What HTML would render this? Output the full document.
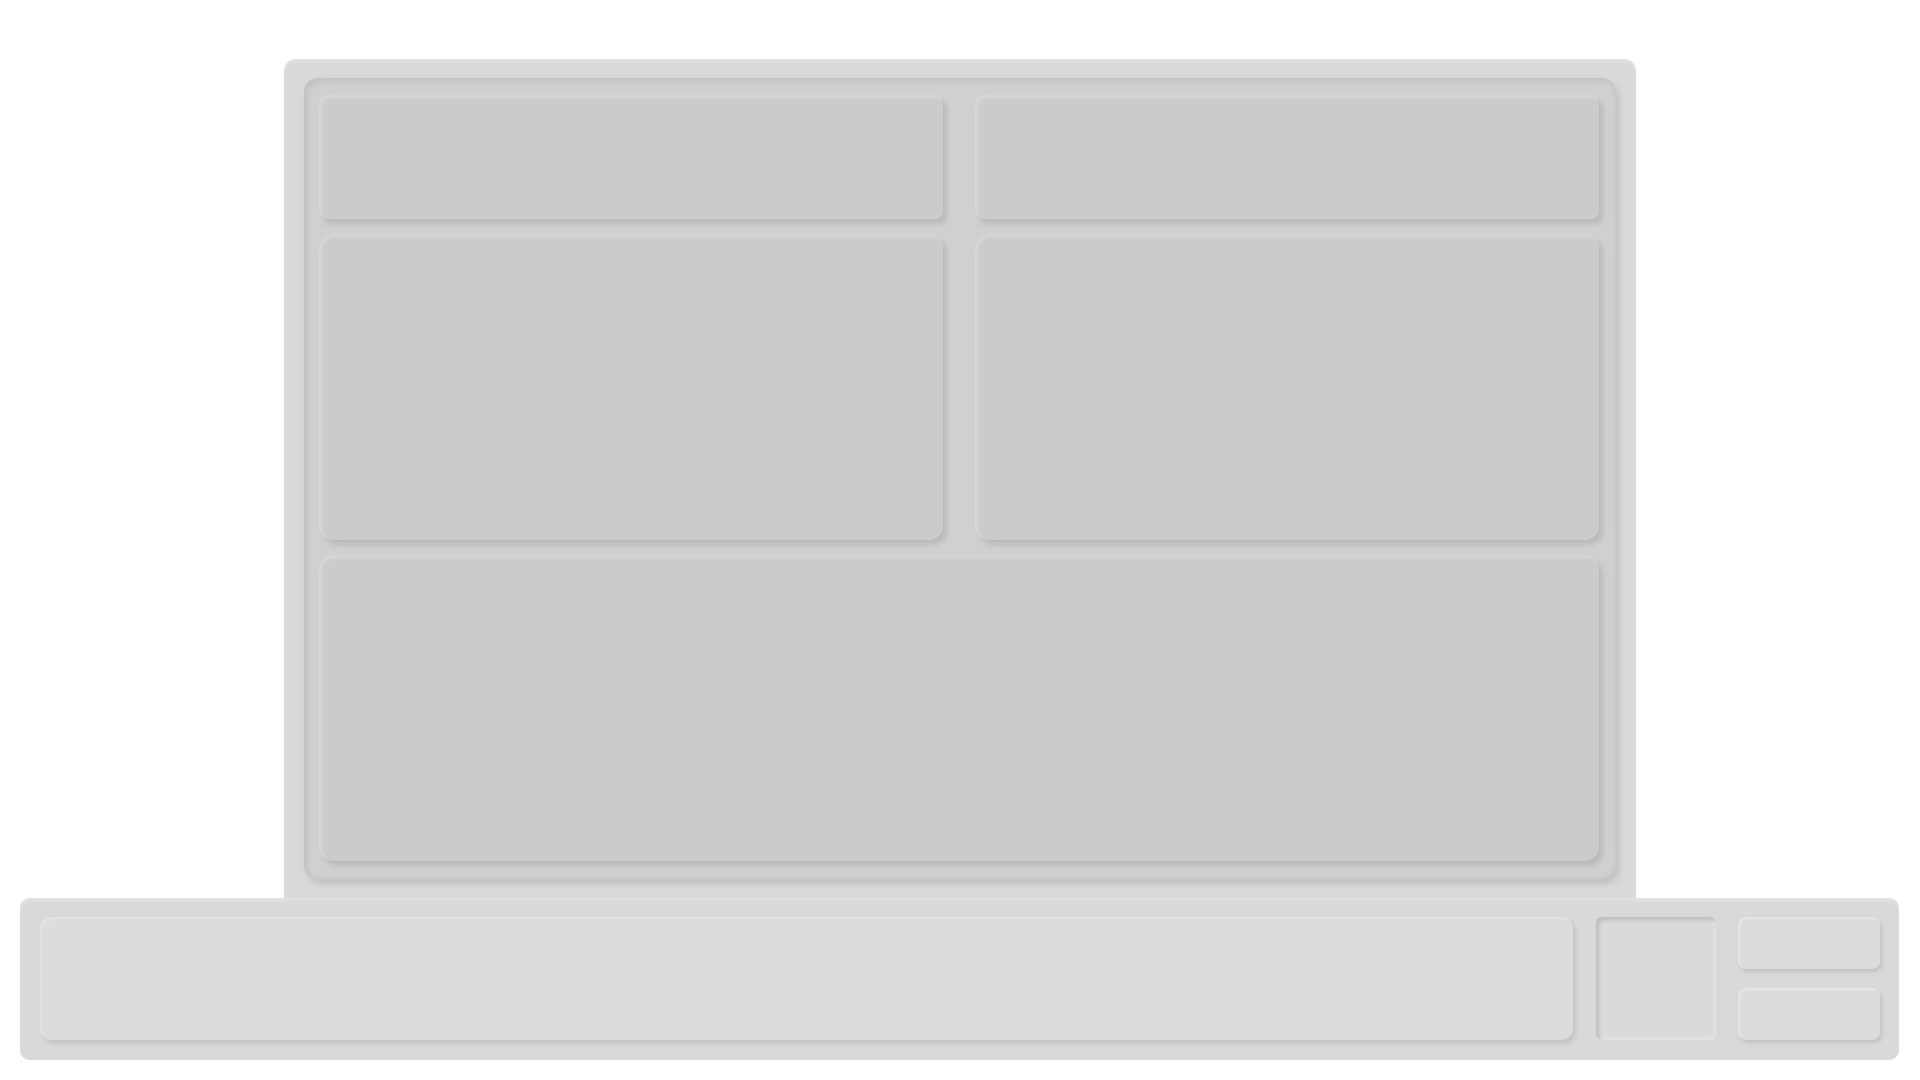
<!DOCTYPE html>
<html><head><style>
body{margin:0;width:1920px;height:1080px;background:#fff;position:relative;overflow:hidden;font-family:"Liberation Sans",sans-serif}
div{position:absolute;box-sizing:border-box}
.outer{left:284px;top:59px;width:1352px;height:845px;background:#d9d9d9;border-radius:12px 12px 0 0;box-shadow:inset 0 3px 3px #e2e2e2}
.inner{left:304px;top:78px;width:1312px;height:801px;background:#d1d0d0;border-radius:14px;box-shadow:inset 4px 4px 6px #c3c2c2,inset -2px -2px 4px #c9c8c8,3px 5px 7px #c2c1c1}
.card{background:#cccbca;border-radius:14px;box-shadow:inset 3px 3px 3px #d8d7d7,4px 5px 6px #bbbaba}
.bar{left:20px;top:898px;width:1879px;height:162px;background:#d9d9d9;border-radius:10px;box-shadow:inset 0 3px 3px #e2e2e2}
.inp{left:40px;top:917px;width:1533px;height:123px;background:#dcdcdc;border-radius:12px;box-shadow:inset 2px 2px 3px #e4e4e4,3px 4px 5px #c4c4c4}
.sq{left:1596px;top:917px;width:120px;height:123px;background:#dadada;border-radius:6px;box-shadow:inset 3px 3px 4px #bdbdbd,inset -2px -2px 3px #e6e6e6}
.btn{left:1738px;width:142px;height:52px;background:#dcdcdc;border-radius:8px;box-shadow:inset 2px 2px 2px #e6e6e6,2px 3px 4px #c2c2c2}
</style></head><body>
<div class="outer"></div>
<div class="inner"></div>
<div class="card" style="left:319px;top:95px;width:624px;height:124px;border-radius:8px"></div>
<div class="card" style="left:975px;top:95px;width:624px;height:124px;border-radius:8px"></div>
<div class="card" style="left:319px;top:234px;width:624px;height:306px"></div>
<div class="card" style="left:975px;top:234px;width:624px;height:306px"></div>
<div class="card" style="left:319px;top:555px;width:1280px;height:306px"></div>
<div class="bar"></div>
<div class="inp"></div>
<div class="sq"></div>
<div class="btn" style="top:917px"></div>
<div class="btn" style="top:988px"></div>
</body></html>
